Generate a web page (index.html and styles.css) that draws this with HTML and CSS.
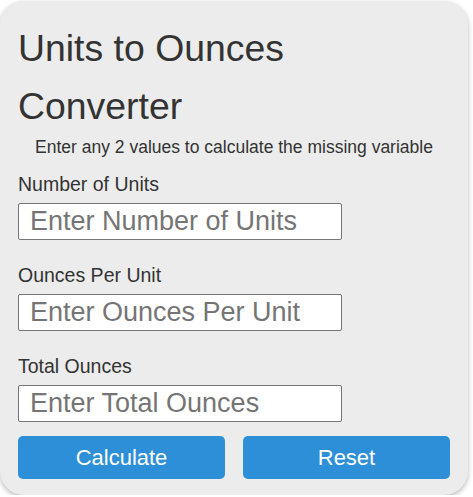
FILE: index.html
```html
<!DOCTYPE html>
<html lang="en">
<head>
  <meta charset="UTF-8">
  <meta name="viewport" content="width=device-width, initial-scale=1.0">
  <title>Units to Ounces Converter</title>
  <link rel="stylesheet" href="styles.css">
</head>
<body>
  <div class="calc-card">
    <h1 class="calc-title">Units to Ounces Converter</h1>
    <p class="calc-hint">Enter any 2 values to calculate the missing variable</p>

    <div class="field">
      <label for="units" class="field-label">Number of Units</label>
      <input type="number" id="units" class="field-input" placeholder="Enter Number of Units">
    </div>
    <div class="field">
      <label for="perUnit" class="field-label">Ounces Per Unit</label>
      <input type="number" id="perUnit" class="field-input" placeholder="Enter Ounces Per Unit">
    </div>
    <div class="field field-last">
      <label for="total" class="field-label">Total Ounces</label>
      <input type="number" id="total" class="field-input" placeholder="Enter Total Ounces">
    </div>

    <div class="actions">
      <button class="btn-calc" onclick="calculate();">Calculate</button>
      <button class="btn-calc" onclick="resetAll();">Reset</button>
    </div>
  </div>

  <script>
    function val(id){
      const v=document.getElementById(id).value;
      return v==='' ? null : parseFloat(v);
    }

    function calculate(){
      const units=val('units');
      const perUnit=val('perUnit');
      const total=val('total');

      if(units!==null && perUnit!==null)
        document.getElementById('total').value=(units*perUnit).toFixed(2);
      else if(units!==null && total!==null && units!==0)
        document.getElementById('perUnit').value=(total/units).toFixed(2);
      else if(perUnit!==null && total!==null && perUnit!==0)
        document.getElementById('units').value=(total/perUnit).toFixed(2);
    }

    function resetAll(){
      ['units','perUnit','total'].forEach(id=>{
        document.getElementById(id).value='';
      });
    }
  </script>
</body>
</html>
```

FILE: styles.css
```css
body {
  margin: 0;
  font-family: Arial, "Liberation Sans", Helvetica, sans-serif;
  color: #333;
}
.calc-card {
  width: 468px;
  box-sizing: border-box;
  margin-top: 1px;
  padding: 18px 18px 16px;
  background-color: #ebeceb;
  border-radius: 24px;
  box-shadow: 0 2px 5px rgba(0, 0, 0, 0.28);
}
.calc-title {
  margin: 0;
  font-size: 37.4px;
  font-weight: 400;
  line-height: 58px;
}
.calc-hint {
  margin: 2px 0 15px;
  font-size: 17.5px;
  text-align: center;
}
.field {
  display: flex;
  flex-direction: column;
  align-items: flex-start;
  margin-bottom: 24px;
}
.field-last {
  margin-bottom: 14px;
}
.field-label {
  font-size: 19.5px;
  margin-bottom: 7px;
}
.field-input {
  width: 324px;
  height: 37px;
  box-sizing: border-box;
  padding: 0 11px;
  border: 1px solid #767676;
  border-radius: 2px;
  background: #fff;
  font-family: inherit;
  font-size: 27px;
  color: #333;
}
.field-input::placeholder {
  color: #757575;
}
.actions {
  display: flex;
  gap: 18px;
}
.btn-calc {
  flex: 1;
  height: 43px;
  border: none;
  border-radius: 5px;
  background-color: #2d8fd8;
  color: #fff;
  font-family: inherit;
  font-size: 22px;
  cursor: pointer;
}
.btn-calc:hover {
  opacity: 0.9;
}
```
